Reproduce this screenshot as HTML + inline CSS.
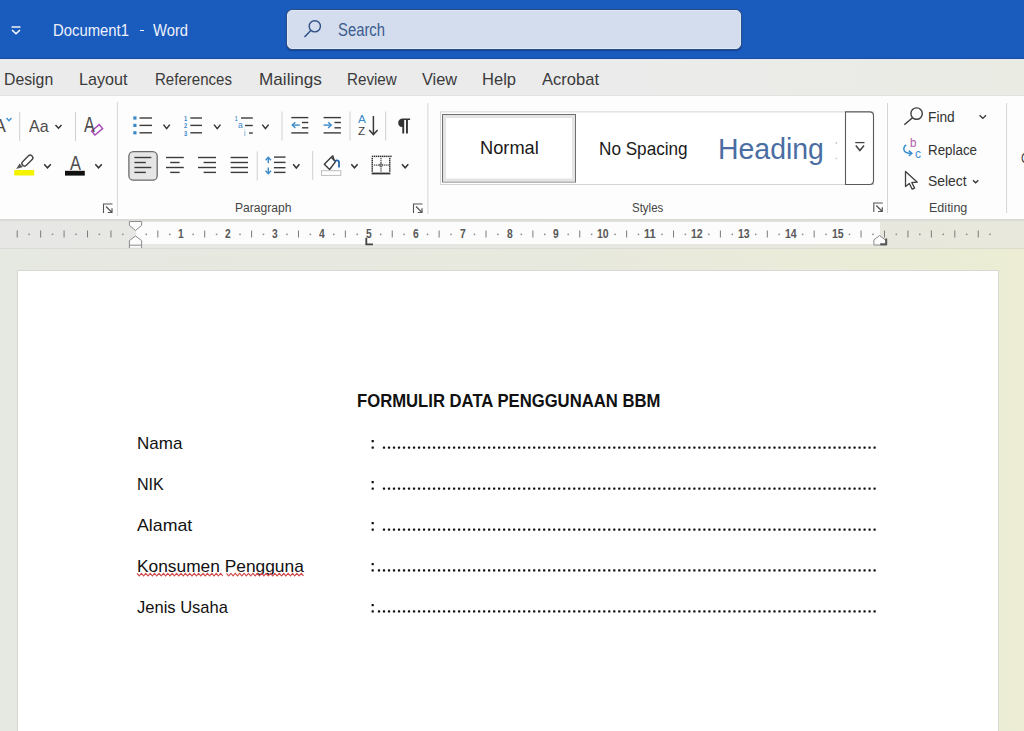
<!DOCTYPE html>
<html><head><meta charset="utf-8"><style>
html,body{margin:0;padding:0;width:1024px;height:731px;overflow:hidden;background:#fff}
body{position:relative;font-family:"Liberation Sans",sans-serif}
.t{position:absolute;white-space:nowrap;line-height:normal;transform-origin:0 0}
svg{position:absolute;left:0;top:0}
</style></head><body>
<div style="position:absolute;left:0;top:0;width:1024px;height:59px;background:#1a5bbe"></div>
<div style="position:absolute;left:0;top:58px;width:1024px;height:1px;background:#1d4a9c"></div>
<div style="position:absolute;left:0;top:59px;width:1024px;height:1px;background:#e2eaf6"></div>
<div class="t" style="left:53.00px;top:21.00px;font-size:16.570px;color:#eef2fb;transform:scaleX(0.8967);">Document1</div>
<div style="position:absolute;left:140px;top:29.8px;width:4px;height:1.6px;background:#eef2fb"></div>
<div class="t" style="left:153.00px;top:21.00px;font-size:16.570px;color:#eef2fb;transform:scaleX(0.8913);">Word</div>
<div style="position:absolute;left:287px;top:10px;width:452px;height:37px;background:#d3dded;border:1px solid #dfe6f4;border-radius:5px;box-shadow:0 0 0 1px #2a4f8a,0 1px 1px 1px rgba(20,40,90,.5)"></div>
<div class="t" style="left:338.00px;top:20.22px;font-size:17.442px;color:#3c5c90;transform:scaleX(0.8501);">Search</div>
<div style="position:absolute;left:0;top:60px;width:1024px;height:36px;background:linear-gradient(90deg,#ebebeb 0%,#ebebec 55%,#eaebe3 100%)"></div>
<div style="position:absolute;left:0;top:95px;width:1024px;height:1px;background:#e2e2e2"></div>
<div class="t" style="left:3.75px;top:69.51px;font-size:17.006px;color:#3a3a3a;transform:scaleX(0.9297);">Design</div>
<div class="t" style="left:79.00px;top:69.51px;font-size:17.006px;color:#3a3a3a;transform:scaleX(0.9491);">Layout</div>
<div class="t" style="left:155.00px;top:69.51px;font-size:17.006px;color:#3a3a3a;transform:scaleX(0.8852);">References</div>
<div class="t" style="left:259.00px;top:69.51px;font-size:17.006px;color:#3a3a3a;transform:scaleX(1.0094);">Mailings</div>
<div class="t" style="left:347.00px;top:69.51px;font-size:17.006px;color:#3a3a3a;transform:scaleX(0.8928);">Review</div>
<div class="t" style="left:422.00px;top:69.51px;font-size:17.006px;color:#3a3a3a;transform:scaleX(0.9600);">View</div>
<div class="t" style="left:481.70px;top:69.51px;font-size:17.006px;color:#3a3a3a;transform:scaleX(0.9729);">Help</div>
<div class="t" style="left:542.00px;top:69.51px;font-size:17.006px;color:#3a3a3a;transform:scaleX(0.9729);">Acrobat</div>
<div style="position:absolute;left:0;top:96px;width:1024px;height:124px;background:#fdfdfd"></div>
<div class="t" style="left:234.50px;top:199.86px;font-size:13.081px;color:#444;transform:scaleX(0.9249);">Paragraph</div>
<div class="t" style="left:632.30px;top:200.03px;font-size:13.227px;color:#444;transform:scaleX(0.8684);">Styles</div>
<div class="t" style="left:928.50px;top:200.03px;font-size:13.227px;color:#444;transform:scaleX(0.9488);">Editing</div>
<div class="t" style="left:928.40px;top:109.15px;font-size:14.535px;color:#333;transform:scaleX(0.9480);">Find</div>
<div class="t" style="left:928.40px;top:141.68px;font-size:14.390px;color:#333;transform:scaleX(0.9298);">Replace</div>
<div class="t" style="left:928.40px;top:173.48px;font-size:14.390px;color:#333;transform:scaleX(0.9674);">Select</div>
<svg width="1024" height="731" style="position:absolute;left:0;top:0">
<line x1="11.5" y1="27" x2="20.5" y2="27" stroke="#ffffff" stroke-width="1.4"/>
<polyline points="12,30 16.0,33.8 20,30" fill="none" stroke="#ffffff" stroke-width="1.5"/>
<circle cx="314.8" cy="26.3" r="5.6" fill="none" stroke="#2d4f86" stroke-width="1.4"/>
<line x1="310.8" y1="30.4" x2="304.5" y2="37" stroke="#2d4f86" stroke-width="1.5"/>
<polyline points="6.5,118 9.0,120.8 11.5,118" fill="none" stroke="#3a8fd0" stroke-width="1.3"/>
<rect x="19.2" y="112" width="1" height="29" fill="#cfcfcf"/>
<rect x="75.0" y="112" width="1" height="29" fill="#cfcfcf"/>
<polyline points="55.5,125 58.5,128.3 61.5,125" fill="none" stroke="#333" stroke-width="1.4"/>
<rect x="-5" y="-2.6" width="10" height="5.2" transform="translate(97.1,129.8) rotate(-40)" fill="#fff" stroke="#a64fb5" stroke-width="1.5"/>
<line x1="95.3" y1="134.3" x2="91.4" y2="129.8" stroke="#a64fb5" stroke-width="0"/>
<rect x="116.9" y="102" width="1" height="114" fill="#d6d6d6"/>
<rect x="-2.6" y="-6.5" width="5.2" height="13" rx="2.4" transform="translate(27.4,160.6) rotate(45)" fill="#fff" stroke="#444" stroke-width="1.4"/>
<polygon points="16.2,169 19.5,163.5 23,167" fill="#555"/>
<rect x="14.2" y="170" width="20" height="5.5" fill="#f3f300"/>
<polyline points="44.2,164.2 47.5,167.8 50.8,164.2" fill="none" stroke="#333" stroke-width="1.5"/>
<rect x="65" y="170.8" width="19.8" height="4.8" fill="#111"/>
<polyline points="95.3,164.2 98.55,167.8 101.8,164.2" fill="none" stroke="#333" stroke-width="1.5"/>
<path d="M103.5,213 V204 H112.5" fill="none" stroke="#555" stroke-width="1.1"/><path d="M106.0,206.5 L112.0,212.5 M112.0,208.2 V212.5 H107.7" fill="none" stroke="#555" stroke-width="1.2"/>
<path d="M413.5,213 V204 H422.5" fill="none" stroke="#555" stroke-width="1.1"/><path d="M416.0,206.5 L422.0,212.5 M422.0,208.2 V212.5 H417.7" fill="none" stroke="#555" stroke-width="1.2"/>
<path d="M873.8,212 V203 H882.8" fill="none" stroke="#555" stroke-width="1.1"/><path d="M876.3,205.5 L882.3,211.5 M882.3,207.2 V211.5 H878.0" fill="none" stroke="#555" stroke-width="1.2"/>
<rect x="133.3" y="116.4" width="3.2" height="3.2" fill="#3a89c9"/>
<line x1="139.5" y1="118" x2="152" y2="118" stroke="#3b3b3b" stroke-width="1.4"/>
<rect x="133.3" y="123.80000000000001" width="3.2" height="3.2" fill="#3a89c9"/>
<line x1="139.5" y1="125.4" x2="152" y2="125.4" stroke="#3b3b3b" stroke-width="1.4"/>
<rect x="133.3" y="131.20000000000002" width="3.2" height="3.2" fill="#3a89c9"/>
<line x1="139.5" y1="132.8" x2="152" y2="132.8" stroke="#3b3b3b" stroke-width="1.4"/>
<polyline points="163.5,124.6 166.65,128.6 169.8,124.6" fill="none" stroke="#333" stroke-width="1.5"/>
<line x1="190.3" y1="118" x2="202" y2="118" stroke="#3b3b3b" stroke-width="1.4"/>
<line x1="190.3" y1="125.4" x2="202" y2="125.4" stroke="#3b3b3b" stroke-width="1.4"/>
<line x1="190.3" y1="132.8" x2="202" y2="132.8" stroke="#3b3b3b" stroke-width="1.4"/>
<polyline points="214,124.6 217.25,128.6 220.5,124.6" fill="none" stroke="#333" stroke-width="1.5"/>
<line x1="241" y1="118" x2="252.8" y2="118" stroke="#3b3b3b" stroke-width="1.4"/>
<line x1="245" y1="125.5" x2="252.8" y2="125.5" stroke="#3b3b3b" stroke-width="1.4"/>
<line x1="249" y1="133" x2="252.8" y2="133" stroke="#3b3b3b" stroke-width="1.4"/>
<polyline points="262.3,124.6 265.45000000000005,128.6 268.6,124.6" fill="none" stroke="#333" stroke-width="1.5"/>
<rect x="281.5" y="111.5" width="1" height="29.0" fill="#cfcfcf"/>
<rect x="349.5" y="111.5" width="1" height="29.0" fill="#cfcfcf"/>
<rect x="385.2" y="111.5" width="1" height="29.0" fill="#cfcfcf"/>
<line x1="291.3" y1="117.6" x2="308.3" y2="117.6" stroke="#3b3b3b" stroke-width="1.4"/>
<line x1="302" y1="122.5" x2="308.3" y2="122.5" stroke="#3b3b3b" stroke-width="1.4"/>
<line x1="302" y1="127.8" x2="308.3" y2="127.8" stroke="#3b3b3b" stroke-width="1.4"/>
<line x1="291.3" y1="132.9" x2="308.3" y2="132.9" stroke="#3b3b3b" stroke-width="1.4"/>
<line x1="292.5" y1="125.1" x2="299.8" y2="125.1" stroke="#3a89c9" stroke-width="1.4"/>
<polyline points="295.3,122.3 292.3,125.1 295.3,127.9" fill="none" stroke="#3a89c9" stroke-width="1.4"/>
<line x1="323.6" y1="117.6" x2="340.9" y2="117.6" stroke="#3b3b3b" stroke-width="1.4"/>
<line x1="334.5" y1="122.5" x2="340.9" y2="122.5" stroke="#3b3b3b" stroke-width="1.4"/>
<line x1="334.5" y1="127.8" x2="340.9" y2="127.8" stroke="#3b3b3b" stroke-width="1.4"/>
<line x1="323.6" y1="132.9" x2="340.9" y2="132.9" stroke="#3b3b3b" stroke-width="1.4"/>
<line x1="323.6" y1="125.1" x2="331" y2="125.1" stroke="#3a89c9" stroke-width="1.4"/>
<polyline points="328.2,122.3 331.2,125.1 328.2,127.9" fill="none" stroke="#3a89c9" stroke-width="1.4"/>
<line x1="373.4" y1="116" x2="373.4" y2="134.5" stroke="#3b3b3b" stroke-width="1.5"/>
<polyline points="369.2,130 373.4,134.6 377.6,130" fill="none" stroke="#3b3b3b" stroke-width="1.5"/>
<path d="M402.8,118.4 H410.1 V120 H407.9 V133.6 H406 V120 H404.2 V133.6 H402.3 V127.1 C399.6,127 398.2,125 398.2,122.7 C398.2,120.3 400,118.4 402.8,118.4 Z" fill="#333"/>
<rect x="427.4" y="103" width="1" height="111" fill="#d6d6d6"/>
<rect x="128.9" y="151.6" width="28.3" height="28.6" rx="4.5" fill="#e6e6e6" stroke="#6b6b6b" stroke-width="1.3"/>
<line x1="134.4" y1="157.5" x2="151.3" y2="157.5" stroke="#3b3b3b" stroke-width="1.4"/><line x1="134.4" y1="162.5" x2="145.8" y2="162.5" stroke="#3b3b3b" stroke-width="1.4"/><line x1="134.4" y1="167.5" x2="151.3" y2="167.5" stroke="#3b3b3b" stroke-width="1.4"/><line x1="134.4" y1="172.4" x2="145.8" y2="172.4" stroke="#3b3b3b" stroke-width="1.4"/>
<line x1="166" y1="157.5" x2="183.8" y2="157.5" stroke="#3b3b3b" stroke-width="1.4"/><line x1="170.2" y1="162.5" x2="179.6" y2="162.5" stroke="#3b3b3b" stroke-width="1.4"/><line x1="166" y1="167.5" x2="183.8" y2="167.5" stroke="#3b3b3b" stroke-width="1.4"/><line x1="170.2" y1="172.4" x2="179.6" y2="172.4" stroke="#3b3b3b" stroke-width="1.4"/>
<line x1="198" y1="157.5" x2="216" y2="157.5" stroke="#3b3b3b" stroke-width="1.4"/><line x1="203.6" y1="162.5" x2="216" y2="162.5" stroke="#3b3b3b" stroke-width="1.4"/><line x1="198" y1="167.5" x2="216" y2="167.5" stroke="#3b3b3b" stroke-width="1.4"/><line x1="203.6" y1="172.4" x2="216" y2="172.4" stroke="#3b3b3b" stroke-width="1.4"/>
<line x1="230.6" y1="157.5" x2="248" y2="157.5" stroke="#3b3b3b" stroke-width="1.4"/><line x1="230.6" y1="162.5" x2="248" y2="162.5" stroke="#3b3b3b" stroke-width="1.4"/><line x1="230.6" y1="167.5" x2="248" y2="167.5" stroke="#3b3b3b" stroke-width="1.4"/><line x1="230.6" y1="172.4" x2="248" y2="172.4" stroke="#3b3b3b" stroke-width="1.4"/>
<rect x="256.7" y="151.5" width="1" height="29.0" fill="#cfcfcf"/>
<rect x="312.2" y="151" width="1" height="29" fill="#cfcfcf"/>
<line x1="274" y1="157.1" x2="285.5" y2="157.1" stroke="#3b3b3b" stroke-width="1.4"/>
<line x1="274" y1="162.4" x2="285.5" y2="162.4" stroke="#3b3b3b" stroke-width="1.4"/>
<line x1="274" y1="167.7" x2="285.5" y2="167.7" stroke="#3b3b3b" stroke-width="1.4"/>
<line x1="274" y1="172.4" x2="285.5" y2="172.4" stroke="#3b3b3b" stroke-width="1.4"/>
<line x1="268.3" y1="157.5" x2="268.3" y2="163.3" stroke="#3a89c9" stroke-width="1.4"/>
<line x1="268.3" y1="167.6" x2="268.3" y2="173.5" stroke="#3a89c9" stroke-width="1.4"/>
<polyline points="265.6,160.2 268.3,157.3 271,160.2" fill="none" stroke="#3a89c9" stroke-width="1.4"/>
<polyline points="265.6,170.8 268.3,173.7 271,170.8" fill="none" stroke="#3a89c9" stroke-width="1.4"/>
<polyline points="293.2,164.2 296.29999999999995,168 299.4,164.2" fill="none" stroke="#333" stroke-width="1.5"/>
<path d="M324.3,164.2 L331.2,157.3 L335.5,161.6 L329.6,169.5 Z" fill="#fff" stroke="#3b3b3b" stroke-width="1.4" stroke-linejoin="round"/>
<path d="M331.2,157.3 L332.8,155.9 L334.2,160.4" fill="none" stroke="#3b3b3b" stroke-width="1.4"/>
<path d="M335.2,161 Q337.5,159.3 339,161.6 L339,167.5" fill="none" stroke="#1f5fa8" stroke-width="1.7"/>
<rect x="321.5" y="170.7" width="19.3" height="4.7" fill="#fff" stroke="#bdbdbd" stroke-width="1"/>
<polyline points="351.3,164.3 354.45000000000005,167.8 357.6,164.3" fill="none" stroke="#333" stroke-width="1.5"/>
<rect x="371.80" y="155.6" width="1.5" height="1.5" fill="#333"/><rect x="373.84" y="155.6" width="1.5" height="1.5" fill="#333"/><rect x="375.88" y="155.6" width="1.5" height="1.5" fill="#333"/><rect x="377.92" y="155.6" width="1.5" height="1.5" fill="#333"/><rect x="379.96" y="155.6" width="1.5" height="1.5" fill="#333"/><rect x="382.00" y="155.6" width="1.5" height="1.5" fill="#333"/><rect x="384.04" y="155.6" width="1.5" height="1.5" fill="#333"/><rect x="386.08" y="155.6" width="1.5" height="1.5" fill="#333"/><rect x="388.12" y="155.6" width="1.5" height="1.5" fill="#333"/><rect x="390.16" y="155.6" width="1.5" height="1.5" fill="#333"/><rect x="371.5" y="157.86" width="1.5" height="1.5" fill="#333"/><rect x="389" y="157.86" width="1.5" height="1.5" fill="#333"/><rect x="380.3" y="157.86" width="1.4" height="1.4" fill="#666"/><rect x="371.5" y="159.92" width="1.5" height="1.5" fill="#333"/><rect x="389" y="159.92" width="1.5" height="1.5" fill="#333"/><rect x="380.3" y="159.92" width="1.4" height="1.4" fill="#666"/><rect x="371.5" y="161.98" width="1.5" height="1.5" fill="#333"/><rect x="389" y="161.98" width="1.5" height="1.5" fill="#333"/><rect x="380.3" y="161.98" width="1.4" height="1.4" fill="#666"/><rect x="371.5" y="164.04" width="1.5" height="1.5" fill="#333"/><rect x="389" y="164.04" width="1.5" height="1.5" fill="#333"/><rect x="380.3" y="164.04" width="1.4" height="1.4" fill="#666"/><rect x="371.5" y="166.10" width="1.5" height="1.5" fill="#333"/><rect x="389" y="166.10" width="1.5" height="1.5" fill="#333"/><rect x="380.3" y="166.10" width="1.4" height="1.4" fill="#666"/><rect x="371.5" y="168.16" width="1.5" height="1.5" fill="#333"/><rect x="389" y="168.16" width="1.5" height="1.5" fill="#333"/><rect x="380.3" y="168.16" width="1.4" height="1.4" fill="#666"/><rect x="371.5" y="170.22" width="1.5" height="1.5" fill="#333"/><rect x="389" y="170.22" width="1.5" height="1.5" fill="#333"/><rect x="380.3" y="170.22" width="1.4" height="1.4" fill="#666"/><rect x="373.84" y="164.4" width="1.4" height="1.4" fill="#666"/><rect x="375.88" y="164.4" width="1.4" height="1.4" fill="#666"/><rect x="377.92" y="164.4" width="1.4" height="1.4" fill="#666"/><rect x="379.96" y="164.4" width="1.4" height="1.4" fill="#666"/><rect x="382.00" y="164.4" width="1.4" height="1.4" fill="#666"/><rect x="384.04" y="164.4" width="1.4" height="1.4" fill="#666"/><rect x="386.08" y="164.4" width="1.4" height="1.4" fill="#666"/><rect x="388.12" y="164.4" width="1.4" height="1.4" fill="#666"/>
<circle cx="381" cy="165.1" r="1.6" fill="none" stroke="#666" stroke-width="0.9"/>
<rect x="371.6" y="172.6" width="18.8" height="1.8" fill="#333"/>
<polyline points="402,164.3 405.15,167.8 408.3,164.3" fill="none" stroke="#333" stroke-width="1.5"/>
<rect x="440.5" y="111.9" width="433" height="72.6" fill="#fff" stroke="#d6d6d6" stroke-width="1"/>
<rect x="442.5" y="114.5" width="133" height="67.5" fill="#fff" stroke="#6e6e6e" stroke-width="1"/>
<rect x="444.5" y="116.5" width="129" height="63.5" fill="none" stroke="#e4e4e4" stroke-width="3"/>
<path d="M845.5,111.9 H869.5 Q873.5,111.9 873.5,115.9 V180.5 Q873.5,184.5 869.5,184.5 H845.5 Z" fill="#fff" stroke="#5a5a5a" stroke-width="1.1"/>
<line x1="855.3" y1="142.6" x2="864.5" y2="142.6" stroke="#444" stroke-width="1.3"/>
<polyline points="855.8,145.6 859.9,150.6 864,145.6" fill="none" stroke="#444" stroke-width="1.5"/>
<rect x="835.7" y="142.2" width="1.1" height="1.4" fill="#9a9a9a"/><rect x="835.7" y="157.8" width="1.1" height="1.4" fill="#b5b5b5"/>
<rect x="887.0" y="103" width="1" height="110" fill="#d6d6d6"/>
<rect x="1006.1" y="103" width="1" height="110" fill="#d6d6d6"/>
<circle cx="916.6" cy="113.6" r="5.7" fill="none" stroke="#3d3d3d" stroke-width="1.4"/>
<line x1="912.5" y1="117.8" x2="904.3" y2="124.8" stroke="#3d3d3d" stroke-width="1.5"/>
<polyline points="979.6,115.2 982.8,118.4 986,115.2" fill="none" stroke="#333" stroke-width="1.3"/>
<path d="M906.2,144.8 Q902.5,147.5 904.5,151.2 Q906.3,153.4 911.5,153.3" fill="none" stroke="#3a8fd0" stroke-width="1.5"/>
<polyline points="908.8,150.6 911.8,153.3 908.8,156" fill="none" stroke="#3a8fd0" stroke-width="1.5"/>
<path d="M905.5,171.5 L905.5,186.6 L909.3,183.4 L912.2,189.2 L914.6,188.1 L911.8,182.5 L917.3,182.2 Z" fill="#fff" stroke="#404040" stroke-width="1.3" stroke-linejoin="round"/>
<polyline points="973,180.2 975.65,182.8 978.3,180.2" fill="none" stroke="#333" stroke-width="1.3"/>
</svg>
<div class="t" style="left:479.80px;top:138.48px;font-size:17.587px;color:#1a1a1a;transform:scaleX(1.0385);">Normal</div>
<div class="t" style="left:598.80px;top:137.64px;font-size:19.186px;color:#1a1a1a;transform:scaleX(0.8942);">No Spacing</div>
<div class="t" style="left:717.80px;top:132.43px;font-size:29.360px;color:#4a6da3;transform:scaleX(0.9683);">Heading</div>
<div class="t" style="left:-6.20px;top:115.92px;font-size:17.442px;color:#4c4c4c;transform:scaleX(1.0183);">A</div>
<div class="t" style="left:28.60px;top:116.61px;font-size:17.006px;color:#4c4c4c;transform:scaleX(0.9409);">Aa</div>
<div class="t" style="left:83.80px;top:110.92px;font-size:22.965px;color:#4c4c4c;transform:scaleX(0.7019);">A</div>
<div class="t" style="left:69.60px;top:151.57px;font-size:19.477px;color:#4c4c4c;transform:scaleX(0.8429);">A</div>
<div class="t" style="left:183.80px;top:113.92px;font-size:7.267px;color:#3a89c9;font-weight:bold;transform:scaleX(0.7934);">1</div>
<div class="t" style="left:183.80px;top:121.42px;font-size:7.267px;color:#3a89c9;font-weight:bold;transform:scaleX(0.7934);">2</div>
<div class="t" style="left:183.80px;top:128.92px;font-size:7.267px;color:#3a89c9;font-weight:bold;transform:scaleX(0.7934);">3</div>
<div class="t" style="left:234.60px;top:113.62px;font-size:7.267px;color:#3a89c9;font-weight:bold;transform:scaleX(0.5950);">1</div>
<div class="t" style="left:237.50px;top:120.26px;font-size:8.889px;color:#3a89c9;transform:scaleX(0.9643);">a</div>
<div class="t" style="left:244.00px;top:127.74px;font-size:8.571px;color:#3a89c9;transform:scaleX(0.7424);">i</div>
<div class="t" style="left:358.40px;top:114.49px;font-size:10.174px;color:#3a89c9;transform:scaleX(1.1589);">A</div>
<div class="t" style="left:358.40px;top:125.73px;font-size:10.465px;color:#3b3b3b;transform:scaleX(1.1122);">Z</div>
<div class="t" style="left:909.80px;top:136.10px;font-size:12.703px;color:#b05aa8;transform:scaleX(0.9078);">b</div>
<div class="t" style="left:914.60px;top:145.73px;font-size:13.333px;color:#3a8fd0;transform:scaleX(0.9000);">c</div>
<div class="t" style="left:1020.80px;top:149.88px;font-size:14.826px;color:#444;transform:scaleX(0.7682);">C</div>
<div style="position:absolute;left:0;top:221px;width:1024px;height:28px;background:linear-gradient(90deg,#e7e8e5,#e7e7e1 60%,#e8e8dc)"></div>
<div style="position:absolute;left:136px;top:222px;width:744px;height:22px;background:#fcfcfc"></div>
<div style="position:absolute;left:0;top:219px;width:1024px;height:3px;background:linear-gradient(180deg,#d6d6d4,#dcdcd8 50%,rgba(225,225,220,0))"></div>
<svg width="1024" height="731" style="position:absolute;left:0;top:0">
<rect x="16.70" y="230.5" width="1" height="7" fill="#7a7a7a"/>
<rect x="28.32" y="233.6" width="1.5" height="1.5" fill="#8a8a8a"/>
<rect x="40.14" y="230.5" width="1" height="7" fill="#7a7a7a"/>
<rect x="51.76" y="233.6" width="1.5" height="1.5" fill="#8a8a8a"/>
<rect x="63.58" y="230.5" width="1" height="7" fill="#7a7a7a"/>
<rect x="75.20" y="233.6" width="1.5" height="1.5" fill="#8a8a8a"/>
<rect x="87.02" y="230.5" width="1" height="7" fill="#7a7a7a"/>
<rect x="98.64" y="233.6" width="1.5" height="1.5" fill="#8a8a8a"/>
<rect x="110.46" y="230.5" width="1" height="7" fill="#7a7a7a"/>
<rect x="122.08" y="233.6" width="1.5" height="1.5" fill="#8a8a8a"/>
<rect x="145.52" y="233.6" width="1.5" height="1.5" fill="#8a8a8a"/>
<rect x="157.34" y="230.5" width="1" height="7" fill="#7a7a7a"/>
<rect x="168.96" y="233.6" width="1.5" height="1.5" fill="#8a8a8a"/>
<rect x="192.40" y="233.6" width="1.5" height="1.5" fill="#8a8a8a"/>
<rect x="204.22" y="230.5" width="1" height="7" fill="#7a7a7a"/>
<rect x="215.84" y="233.6" width="1.5" height="1.5" fill="#8a8a8a"/>
<rect x="239.28" y="233.6" width="1.5" height="1.5" fill="#8a8a8a"/>
<rect x="251.10" y="230.5" width="1" height="7" fill="#7a7a7a"/>
<rect x="262.72" y="233.6" width="1.5" height="1.5" fill="#8a8a8a"/>
<rect x="286.16" y="233.6" width="1.5" height="1.5" fill="#8a8a8a"/>
<rect x="297.98" y="230.5" width="1" height="7" fill="#7a7a7a"/>
<rect x="309.60" y="233.6" width="1.5" height="1.5" fill="#8a8a8a"/>
<rect x="333.04" y="233.6" width="1.5" height="1.5" fill="#8a8a8a"/>
<rect x="344.86" y="230.5" width="1" height="7" fill="#7a7a7a"/>
<rect x="356.48" y="233.6" width="1.5" height="1.5" fill="#8a8a8a"/>
<rect x="379.92" y="233.6" width="1.5" height="1.5" fill="#8a8a8a"/>
<rect x="391.74" y="230.5" width="1" height="7" fill="#7a7a7a"/>
<rect x="403.36" y="233.6" width="1.5" height="1.5" fill="#8a8a8a"/>
<rect x="426.80" y="233.6" width="1.5" height="1.5" fill="#8a8a8a"/>
<rect x="438.62" y="230.5" width="1" height="7" fill="#7a7a7a"/>
<rect x="450.24" y="233.6" width="1.5" height="1.5" fill="#8a8a8a"/>
<rect x="473.68" y="233.6" width="1.5" height="1.5" fill="#8a8a8a"/>
<rect x="485.50" y="230.5" width="1" height="7" fill="#7a7a7a"/>
<rect x="497.12" y="233.6" width="1.5" height="1.5" fill="#8a8a8a"/>
<rect x="520.56" y="233.6" width="1.5" height="1.5" fill="#8a8a8a"/>
<rect x="532.38" y="230.5" width="1" height="7" fill="#7a7a7a"/>
<rect x="544.00" y="233.6" width="1.5" height="1.5" fill="#8a8a8a"/>
<rect x="567.44" y="233.6" width="1.5" height="1.5" fill="#8a8a8a"/>
<rect x="579.26" y="230.5" width="1" height="7" fill="#7a7a7a"/>
<rect x="590.88" y="233.6" width="1.5" height="1.5" fill="#8a8a8a"/>
<rect x="614.32" y="233.6" width="1.5" height="1.5" fill="#8a8a8a"/>
<rect x="626.14" y="230.5" width="1" height="7" fill="#7a7a7a"/>
<rect x="637.76" y="233.6" width="1.5" height="1.5" fill="#8a8a8a"/>
<rect x="661.20" y="233.6" width="1.5" height="1.5" fill="#8a8a8a"/>
<rect x="673.02" y="230.5" width="1" height="7" fill="#7a7a7a"/>
<rect x="684.64" y="233.6" width="1.5" height="1.5" fill="#8a8a8a"/>
<rect x="708.08" y="233.6" width="1.5" height="1.5" fill="#8a8a8a"/>
<rect x="719.90" y="230.5" width="1" height="7" fill="#7a7a7a"/>
<rect x="731.52" y="233.6" width="1.5" height="1.5" fill="#8a8a8a"/>
<rect x="754.96" y="233.6" width="1.5" height="1.5" fill="#8a8a8a"/>
<rect x="766.78" y="230.5" width="1" height="7" fill="#7a7a7a"/>
<rect x="778.40" y="233.6" width="1.5" height="1.5" fill="#8a8a8a"/>
<rect x="801.84" y="233.6" width="1.5" height="1.5" fill="#8a8a8a"/>
<rect x="813.66" y="230.5" width="1" height="7" fill="#7a7a7a"/>
<rect x="825.28" y="233.6" width="1.5" height="1.5" fill="#8a8a8a"/>
<rect x="848.72" y="233.6" width="1.5" height="1.5" fill="#8a8a8a"/>
<rect x="860.54" y="230.5" width="1" height="7" fill="#7a7a7a"/>
<rect x="872.16" y="233.6" width="1.5" height="1.5" fill="#8a8a8a"/>
<rect x="883.98" y="230.5" width="1" height="7" fill="#7a7a7a"/>
<rect x="895.60" y="233.6" width="1.5" height="1.5" fill="#8a8a8a"/>
<rect x="907.42" y="230.5" width="1" height="7" fill="#7a7a7a"/>
<rect x="919.04" y="233.6" width="1.5" height="1.5" fill="#8a8a8a"/>
<rect x="930.86" y="230.5" width="1" height="7" fill="#7a7a7a"/>
<rect x="942.48" y="233.6" width="1.5" height="1.5" fill="#8a8a8a"/>
<rect x="954.30" y="230.5" width="1" height="7" fill="#7a7a7a"/>
<rect x="965.92" y="233.6" width="1.5" height="1.5" fill="#8a8a8a"/>
<rect x="977.74" y="230.5" width="1" height="7" fill="#7a7a7a"/>
<rect x="989.36" y="233.6" width="1.5" height="1.5" fill="#8a8a8a"/>
</svg>
<div class="t" style="left:178.43px;top:227.18px;font-size:12.064px;color:#585858;font-weight:bold;transform:scaleX(0.8513);">1</div>
<div class="t" style="left:225.31px;top:227.18px;font-size:12.064px;color:#585858;font-weight:bold;transform:scaleX(0.8513);">2</div>
<div class="t" style="left:272.19px;top:227.18px;font-size:12.064px;color:#585858;font-weight:bold;transform:scaleX(0.8513);">3</div>
<div class="t" style="left:319.07px;top:227.18px;font-size:12.064px;color:#585858;font-weight:bold;transform:scaleX(0.8513);">4</div>
<div class="t" style="left:365.95px;top:227.18px;font-size:12.064px;color:#585858;font-weight:bold;transform:scaleX(0.8513);">5</div>
<div class="t" style="left:412.83px;top:227.18px;font-size:12.064px;color:#585858;font-weight:bold;transform:scaleX(0.8513);">6</div>
<div class="t" style="left:459.71px;top:227.18px;font-size:12.064px;color:#585858;font-weight:bold;transform:scaleX(0.8513);">7</div>
<div class="t" style="left:506.59px;top:227.18px;font-size:12.064px;color:#585858;font-weight:bold;transform:scaleX(0.8513);">8</div>
<div class="t" style="left:553.47px;top:227.18px;font-size:12.064px;color:#585858;font-weight:bold;transform:scaleX(0.8513);">9</div>
<div class="t" style="left:597.35px;top:227.18px;font-size:12.064px;color:#585858;font-weight:bold;transform:scaleX(0.8737);">10</div>
<div class="t" style="left:644.23px;top:227.18px;font-size:12.064px;color:#585858;font-weight:bold;transform:scaleX(0.9193);">11</div>
<div class="t" style="left:691.11px;top:227.18px;font-size:12.064px;color:#585858;font-weight:bold;transform:scaleX(0.8737);">12</div>
<div class="t" style="left:737.99px;top:227.18px;font-size:12.064px;color:#585858;font-weight:bold;transform:scaleX(0.8737);">13</div>
<div class="t" style="left:784.87px;top:227.18px;font-size:12.064px;color:#585858;font-weight:bold;transform:scaleX(0.8737);">14</div>
<div class="t" style="left:831.75px;top:227.18px;font-size:12.064px;color:#585858;font-weight:bold;transform:scaleX(0.8737);">15</div>
<svg width="1024" height="731" style="position:absolute;left:0;top:0">
<path d="M129.4,221.5 H141.6 V225.4 L135.5,230.5 L129.4,225.4 Z" fill="#fcfcfc" stroke="#8c8c8c" stroke-width="1"/>
<path d="M135.5,236 L141.6,240.6 V248.4 H129.4 V240.6 Z" fill="#fcfcfc" stroke="#8c8c8c" stroke-width="1"/>
<line x1="129.4" y1="245.2" x2="141.6" y2="245.2" stroke="#8c8c8c" stroke-width="1"/>
<path d="M366.3,237.8 V244.4 H373" fill="none" stroke="#444" stroke-width="1.8"/>
<path d="M873.9,245 V239.9 L879.5,235.5 L886.2,240.6 V245 Z" fill="#fcfcfc" stroke="#8a8a8a" stroke-width="1"/>
<path d="M880.2,244.3 H886.2 V238.6" fill="none" stroke="#555" stroke-width="2"/>
</svg>
<div style="position:absolute;left:0;top:249px;width:1024px;height:482px;background:linear-gradient(90deg,#e6e8e2,#e8e9de 55%,#ecedd4)"></div>
<div style="position:absolute;left:0;top:248px;width:1024px;height:1px;background:linear-gradient(90deg,#dadada,#dcdcd6 70%,#dcdccc)"></div>
<div style="position:absolute;left:17px;top:270px;width:980px;height:461px;background:#fff;border:1px solid #d8d8d4;border-bottom:none"></div>
<div class="t" style="left:356.60px;top:391.48px;font-size:17.587px;color:#111;font-weight:bold;transform:scaleX(0.9482);">FORMULIR DATA PENGGUNAAN BBM</div>
<div class="t" style="left:137.00px;top:433.28px;font-size:17.151px;color:#111;transform:scaleX(0.9936);">Nama</div>
<div class="t" style="left:137.00px;top:474.48px;font-size:17.151px;color:#111;transform:scaleX(0.9385);">NIK</div>
<div class="t" style="left:137.00px;top:515.48px;font-size:17.151px;color:#111;transform:scaleX(1.0349);">Alamat</div>
<div class="t" style="left:137.00px;top:556.28px;font-size:17.151px;color:#111;transform:scaleX(1.0116);">Konsumen Pengguna</div>
<div class="t" style="left:137.00px;top:597.48px;font-size:17.151px;color:#111;transform:scaleX(0.9638);">Jenis Usaha</div>
<svg width="1024" height="731" style="position:absolute;left:0;top:0">
<rect x="371.55" y="440.00" width="2.3" height="2.3" rx="0.6" fill="#111"/>
<rect x="371.55" y="446.40" width="2.3" height="2.3" rx="0.6" fill="#111"/>
<rect x="382.86" y="446.40" width="2.3" height="2.3" rx="0.6" fill="#111"/>
<rect x="387.87" y="446.40" width="2.3" height="2.3" rx="0.6" fill="#111"/>
<rect x="392.87" y="446.40" width="2.3" height="2.3" rx="0.6" fill="#111"/>
<rect x="397.88" y="446.40" width="2.3" height="2.3" rx="0.6" fill="#111"/>
<rect x="402.89" y="446.40" width="2.3" height="2.3" rx="0.6" fill="#111"/>
<rect x="407.89" y="446.40" width="2.3" height="2.3" rx="0.6" fill="#111"/>
<rect x="412.90" y="446.40" width="2.3" height="2.3" rx="0.6" fill="#111"/>
<rect x="417.90" y="446.40" width="2.3" height="2.3" rx="0.6" fill="#111"/>
<rect x="422.91" y="446.40" width="2.3" height="2.3" rx="0.6" fill="#111"/>
<rect x="427.92" y="446.40" width="2.3" height="2.3" rx="0.6" fill="#111"/>
<rect x="432.92" y="446.40" width="2.3" height="2.3" rx="0.6" fill="#111"/>
<rect x="437.93" y="446.40" width="2.3" height="2.3" rx="0.6" fill="#111"/>
<rect x="442.93" y="446.40" width="2.3" height="2.3" rx="0.6" fill="#111"/>
<rect x="447.94" y="446.40" width="2.3" height="2.3" rx="0.6" fill="#111"/>
<rect x="452.95" y="446.40" width="2.3" height="2.3" rx="0.6" fill="#111"/>
<rect x="457.95" y="446.40" width="2.3" height="2.3" rx="0.6" fill="#111"/>
<rect x="462.96" y="446.40" width="2.3" height="2.3" rx="0.6" fill="#111"/>
<rect x="467.96" y="446.40" width="2.3" height="2.3" rx="0.6" fill="#111"/>
<rect x="472.97" y="446.40" width="2.3" height="2.3" rx="0.6" fill="#111"/>
<rect x="477.98" y="446.40" width="2.3" height="2.3" rx="0.6" fill="#111"/>
<rect x="482.98" y="446.40" width="2.3" height="2.3" rx="0.6" fill="#111"/>
<rect x="487.99" y="446.40" width="2.3" height="2.3" rx="0.6" fill="#111"/>
<rect x="492.99" y="446.40" width="2.3" height="2.3" rx="0.6" fill="#111"/>
<rect x="498.00" y="446.40" width="2.3" height="2.3" rx="0.6" fill="#111"/>
<rect x="503.01" y="446.40" width="2.3" height="2.3" rx="0.6" fill="#111"/>
<rect x="508.01" y="446.40" width="2.3" height="2.3" rx="0.6" fill="#111"/>
<rect x="513.02" y="446.40" width="2.3" height="2.3" rx="0.6" fill="#111"/>
<rect x="518.02" y="446.40" width="2.3" height="2.3" rx="0.6" fill="#111"/>
<rect x="523.03" y="446.40" width="2.3" height="2.3" rx="0.6" fill="#111"/>
<rect x="528.04" y="446.40" width="2.3" height="2.3" rx="0.6" fill="#111"/>
<rect x="533.04" y="446.40" width="2.3" height="2.3" rx="0.6" fill="#111"/>
<rect x="538.05" y="446.40" width="2.3" height="2.3" rx="0.6" fill="#111"/>
<rect x="543.05" y="446.40" width="2.3" height="2.3" rx="0.6" fill="#111"/>
<rect x="548.06" y="446.40" width="2.3" height="2.3" rx="0.6" fill="#111"/>
<rect x="553.07" y="446.40" width="2.3" height="2.3" rx="0.6" fill="#111"/>
<rect x="558.07" y="446.40" width="2.3" height="2.3" rx="0.6" fill="#111"/>
<rect x="563.08" y="446.40" width="2.3" height="2.3" rx="0.6" fill="#111"/>
<rect x="568.08" y="446.40" width="2.3" height="2.3" rx="0.6" fill="#111"/>
<rect x="573.09" y="446.40" width="2.3" height="2.3" rx="0.6" fill="#111"/>
<rect x="578.10" y="446.40" width="2.3" height="2.3" rx="0.6" fill="#111"/>
<rect x="583.10" y="446.40" width="2.3" height="2.3" rx="0.6" fill="#111"/>
<rect x="588.11" y="446.40" width="2.3" height="2.3" rx="0.6" fill="#111"/>
<rect x="593.11" y="446.40" width="2.3" height="2.3" rx="0.6" fill="#111"/>
<rect x="598.12" y="446.40" width="2.3" height="2.3" rx="0.6" fill="#111"/>
<rect x="603.13" y="446.40" width="2.3" height="2.3" rx="0.6" fill="#111"/>
<rect x="608.13" y="446.40" width="2.3" height="2.3" rx="0.6" fill="#111"/>
<rect x="613.14" y="446.40" width="2.3" height="2.3" rx="0.6" fill="#111"/>
<rect x="618.14" y="446.40" width="2.3" height="2.3" rx="0.6" fill="#111"/>
<rect x="623.15" y="446.40" width="2.3" height="2.3" rx="0.6" fill="#111"/>
<rect x="628.16" y="446.40" width="2.3" height="2.3" rx="0.6" fill="#111"/>
<rect x="633.16" y="446.40" width="2.3" height="2.3" rx="0.6" fill="#111"/>
<rect x="638.17" y="446.40" width="2.3" height="2.3" rx="0.6" fill="#111"/>
<rect x="643.17" y="446.40" width="2.3" height="2.3" rx="0.6" fill="#111"/>
<rect x="648.18" y="446.40" width="2.3" height="2.3" rx="0.6" fill="#111"/>
<rect x="653.19" y="446.40" width="2.3" height="2.3" rx="0.6" fill="#111"/>
<rect x="658.19" y="446.40" width="2.3" height="2.3" rx="0.6" fill="#111"/>
<rect x="663.20" y="446.40" width="2.3" height="2.3" rx="0.6" fill="#111"/>
<rect x="668.20" y="446.40" width="2.3" height="2.3" rx="0.6" fill="#111"/>
<rect x="673.21" y="446.40" width="2.3" height="2.3" rx="0.6" fill="#111"/>
<rect x="678.22" y="446.40" width="2.3" height="2.3" rx="0.6" fill="#111"/>
<rect x="683.22" y="446.40" width="2.3" height="2.3" rx="0.6" fill="#111"/>
<rect x="688.23" y="446.40" width="2.3" height="2.3" rx="0.6" fill="#111"/>
<rect x="693.23" y="446.40" width="2.3" height="2.3" rx="0.6" fill="#111"/>
<rect x="698.24" y="446.40" width="2.3" height="2.3" rx="0.6" fill="#111"/>
<rect x="703.25" y="446.40" width="2.3" height="2.3" rx="0.6" fill="#111"/>
<rect x="708.25" y="446.40" width="2.3" height="2.3" rx="0.6" fill="#111"/>
<rect x="713.26" y="446.40" width="2.3" height="2.3" rx="0.6" fill="#111"/>
<rect x="718.26" y="446.40" width="2.3" height="2.3" rx="0.6" fill="#111"/>
<rect x="723.27" y="446.40" width="2.3" height="2.3" rx="0.6" fill="#111"/>
<rect x="728.28" y="446.40" width="2.3" height="2.3" rx="0.6" fill="#111"/>
<rect x="733.28" y="446.40" width="2.3" height="2.3" rx="0.6" fill="#111"/>
<rect x="738.29" y="446.40" width="2.3" height="2.3" rx="0.6" fill="#111"/>
<rect x="743.29" y="446.40" width="2.3" height="2.3" rx="0.6" fill="#111"/>
<rect x="748.30" y="446.40" width="2.3" height="2.3" rx="0.6" fill="#111"/>
<rect x="753.31" y="446.40" width="2.3" height="2.3" rx="0.6" fill="#111"/>
<rect x="758.31" y="446.40" width="2.3" height="2.3" rx="0.6" fill="#111"/>
<rect x="763.32" y="446.40" width="2.3" height="2.3" rx="0.6" fill="#111"/>
<rect x="768.32" y="446.40" width="2.3" height="2.3" rx="0.6" fill="#111"/>
<rect x="773.33" y="446.40" width="2.3" height="2.3" rx="0.6" fill="#111"/>
<rect x="778.34" y="446.40" width="2.3" height="2.3" rx="0.6" fill="#111"/>
<rect x="783.34" y="446.40" width="2.3" height="2.3" rx="0.6" fill="#111"/>
<rect x="788.35" y="446.40" width="2.3" height="2.3" rx="0.6" fill="#111"/>
<rect x="793.35" y="446.40" width="2.3" height="2.3" rx="0.6" fill="#111"/>
<rect x="798.36" y="446.40" width="2.3" height="2.3" rx="0.6" fill="#111"/>
<rect x="803.37" y="446.40" width="2.3" height="2.3" rx="0.6" fill="#111"/>
<rect x="808.37" y="446.40" width="2.3" height="2.3" rx="0.6" fill="#111"/>
<rect x="813.38" y="446.40" width="2.3" height="2.3" rx="0.6" fill="#111"/>
<rect x="818.38" y="446.40" width="2.3" height="2.3" rx="0.6" fill="#111"/>
<rect x="823.39" y="446.40" width="2.3" height="2.3" rx="0.6" fill="#111"/>
<rect x="828.40" y="446.40" width="2.3" height="2.3" rx="0.6" fill="#111"/>
<rect x="833.40" y="446.40" width="2.3" height="2.3" rx="0.6" fill="#111"/>
<rect x="838.41" y="446.40" width="2.3" height="2.3" rx="0.6" fill="#111"/>
<rect x="843.41" y="446.40" width="2.3" height="2.3" rx="0.6" fill="#111"/>
<rect x="848.42" y="446.40" width="2.3" height="2.3" rx="0.6" fill="#111"/>
<rect x="853.43" y="446.40" width="2.3" height="2.3" rx="0.6" fill="#111"/>
<rect x="858.43" y="446.40" width="2.3" height="2.3" rx="0.6" fill="#111"/>
<rect x="863.44" y="446.40" width="2.3" height="2.3" rx="0.6" fill="#111"/>
<rect x="868.44" y="446.40" width="2.3" height="2.3" rx="0.6" fill="#111"/>
<rect x="873.45" y="446.40" width="2.3" height="2.3" rx="0.6" fill="#111"/>
<rect x="371.55" y="481.00" width="2.3" height="2.3" rx="0.6" fill="#111"/>
<rect x="371.55" y="487.40" width="2.3" height="2.3" rx="0.6" fill="#111"/>
<rect x="382.86" y="487.40" width="2.3" height="2.3" rx="0.6" fill="#111"/>
<rect x="387.87" y="487.40" width="2.3" height="2.3" rx="0.6" fill="#111"/>
<rect x="392.87" y="487.40" width="2.3" height="2.3" rx="0.6" fill="#111"/>
<rect x="397.88" y="487.40" width="2.3" height="2.3" rx="0.6" fill="#111"/>
<rect x="402.89" y="487.40" width="2.3" height="2.3" rx="0.6" fill="#111"/>
<rect x="407.89" y="487.40" width="2.3" height="2.3" rx="0.6" fill="#111"/>
<rect x="412.90" y="487.40" width="2.3" height="2.3" rx="0.6" fill="#111"/>
<rect x="417.90" y="487.40" width="2.3" height="2.3" rx="0.6" fill="#111"/>
<rect x="422.91" y="487.40" width="2.3" height="2.3" rx="0.6" fill="#111"/>
<rect x="427.92" y="487.40" width="2.3" height="2.3" rx="0.6" fill="#111"/>
<rect x="432.92" y="487.40" width="2.3" height="2.3" rx="0.6" fill="#111"/>
<rect x="437.93" y="487.40" width="2.3" height="2.3" rx="0.6" fill="#111"/>
<rect x="442.93" y="487.40" width="2.3" height="2.3" rx="0.6" fill="#111"/>
<rect x="447.94" y="487.40" width="2.3" height="2.3" rx="0.6" fill="#111"/>
<rect x="452.95" y="487.40" width="2.3" height="2.3" rx="0.6" fill="#111"/>
<rect x="457.95" y="487.40" width="2.3" height="2.3" rx="0.6" fill="#111"/>
<rect x="462.96" y="487.40" width="2.3" height="2.3" rx="0.6" fill="#111"/>
<rect x="467.96" y="487.40" width="2.3" height="2.3" rx="0.6" fill="#111"/>
<rect x="472.97" y="487.40" width="2.3" height="2.3" rx="0.6" fill="#111"/>
<rect x="477.98" y="487.40" width="2.3" height="2.3" rx="0.6" fill="#111"/>
<rect x="482.98" y="487.40" width="2.3" height="2.3" rx="0.6" fill="#111"/>
<rect x="487.99" y="487.40" width="2.3" height="2.3" rx="0.6" fill="#111"/>
<rect x="492.99" y="487.40" width="2.3" height="2.3" rx="0.6" fill="#111"/>
<rect x="498.00" y="487.40" width="2.3" height="2.3" rx="0.6" fill="#111"/>
<rect x="503.01" y="487.40" width="2.3" height="2.3" rx="0.6" fill="#111"/>
<rect x="508.01" y="487.40" width="2.3" height="2.3" rx="0.6" fill="#111"/>
<rect x="513.02" y="487.40" width="2.3" height="2.3" rx="0.6" fill="#111"/>
<rect x="518.02" y="487.40" width="2.3" height="2.3" rx="0.6" fill="#111"/>
<rect x="523.03" y="487.40" width="2.3" height="2.3" rx="0.6" fill="#111"/>
<rect x="528.04" y="487.40" width="2.3" height="2.3" rx="0.6" fill="#111"/>
<rect x="533.04" y="487.40" width="2.3" height="2.3" rx="0.6" fill="#111"/>
<rect x="538.05" y="487.40" width="2.3" height="2.3" rx="0.6" fill="#111"/>
<rect x="543.05" y="487.40" width="2.3" height="2.3" rx="0.6" fill="#111"/>
<rect x="548.06" y="487.40" width="2.3" height="2.3" rx="0.6" fill="#111"/>
<rect x="553.07" y="487.40" width="2.3" height="2.3" rx="0.6" fill="#111"/>
<rect x="558.07" y="487.40" width="2.3" height="2.3" rx="0.6" fill="#111"/>
<rect x="563.08" y="487.40" width="2.3" height="2.3" rx="0.6" fill="#111"/>
<rect x="568.08" y="487.40" width="2.3" height="2.3" rx="0.6" fill="#111"/>
<rect x="573.09" y="487.40" width="2.3" height="2.3" rx="0.6" fill="#111"/>
<rect x="578.10" y="487.40" width="2.3" height="2.3" rx="0.6" fill="#111"/>
<rect x="583.10" y="487.40" width="2.3" height="2.3" rx="0.6" fill="#111"/>
<rect x="588.11" y="487.40" width="2.3" height="2.3" rx="0.6" fill="#111"/>
<rect x="593.11" y="487.40" width="2.3" height="2.3" rx="0.6" fill="#111"/>
<rect x="598.12" y="487.40" width="2.3" height="2.3" rx="0.6" fill="#111"/>
<rect x="603.13" y="487.40" width="2.3" height="2.3" rx="0.6" fill="#111"/>
<rect x="608.13" y="487.40" width="2.3" height="2.3" rx="0.6" fill="#111"/>
<rect x="613.14" y="487.40" width="2.3" height="2.3" rx="0.6" fill="#111"/>
<rect x="618.14" y="487.40" width="2.3" height="2.3" rx="0.6" fill="#111"/>
<rect x="623.15" y="487.40" width="2.3" height="2.3" rx="0.6" fill="#111"/>
<rect x="628.16" y="487.40" width="2.3" height="2.3" rx="0.6" fill="#111"/>
<rect x="633.16" y="487.40" width="2.3" height="2.3" rx="0.6" fill="#111"/>
<rect x="638.17" y="487.40" width="2.3" height="2.3" rx="0.6" fill="#111"/>
<rect x="643.17" y="487.40" width="2.3" height="2.3" rx="0.6" fill="#111"/>
<rect x="648.18" y="487.40" width="2.3" height="2.3" rx="0.6" fill="#111"/>
<rect x="653.19" y="487.40" width="2.3" height="2.3" rx="0.6" fill="#111"/>
<rect x="658.19" y="487.40" width="2.3" height="2.3" rx="0.6" fill="#111"/>
<rect x="663.20" y="487.40" width="2.3" height="2.3" rx="0.6" fill="#111"/>
<rect x="668.20" y="487.40" width="2.3" height="2.3" rx="0.6" fill="#111"/>
<rect x="673.21" y="487.40" width="2.3" height="2.3" rx="0.6" fill="#111"/>
<rect x="678.22" y="487.40" width="2.3" height="2.3" rx="0.6" fill="#111"/>
<rect x="683.22" y="487.40" width="2.3" height="2.3" rx="0.6" fill="#111"/>
<rect x="688.23" y="487.40" width="2.3" height="2.3" rx="0.6" fill="#111"/>
<rect x="693.23" y="487.40" width="2.3" height="2.3" rx="0.6" fill="#111"/>
<rect x="698.24" y="487.40" width="2.3" height="2.3" rx="0.6" fill="#111"/>
<rect x="703.25" y="487.40" width="2.3" height="2.3" rx="0.6" fill="#111"/>
<rect x="708.25" y="487.40" width="2.3" height="2.3" rx="0.6" fill="#111"/>
<rect x="713.26" y="487.40" width="2.3" height="2.3" rx="0.6" fill="#111"/>
<rect x="718.26" y="487.40" width="2.3" height="2.3" rx="0.6" fill="#111"/>
<rect x="723.27" y="487.40" width="2.3" height="2.3" rx="0.6" fill="#111"/>
<rect x="728.28" y="487.40" width="2.3" height="2.3" rx="0.6" fill="#111"/>
<rect x="733.28" y="487.40" width="2.3" height="2.3" rx="0.6" fill="#111"/>
<rect x="738.29" y="487.40" width="2.3" height="2.3" rx="0.6" fill="#111"/>
<rect x="743.29" y="487.40" width="2.3" height="2.3" rx="0.6" fill="#111"/>
<rect x="748.30" y="487.40" width="2.3" height="2.3" rx="0.6" fill="#111"/>
<rect x="753.31" y="487.40" width="2.3" height="2.3" rx="0.6" fill="#111"/>
<rect x="758.31" y="487.40" width="2.3" height="2.3" rx="0.6" fill="#111"/>
<rect x="763.32" y="487.40" width="2.3" height="2.3" rx="0.6" fill="#111"/>
<rect x="768.32" y="487.40" width="2.3" height="2.3" rx="0.6" fill="#111"/>
<rect x="773.33" y="487.40" width="2.3" height="2.3" rx="0.6" fill="#111"/>
<rect x="778.34" y="487.40" width="2.3" height="2.3" rx="0.6" fill="#111"/>
<rect x="783.34" y="487.40" width="2.3" height="2.3" rx="0.6" fill="#111"/>
<rect x="788.35" y="487.40" width="2.3" height="2.3" rx="0.6" fill="#111"/>
<rect x="793.35" y="487.40" width="2.3" height="2.3" rx="0.6" fill="#111"/>
<rect x="798.36" y="487.40" width="2.3" height="2.3" rx="0.6" fill="#111"/>
<rect x="803.37" y="487.40" width="2.3" height="2.3" rx="0.6" fill="#111"/>
<rect x="808.37" y="487.40" width="2.3" height="2.3" rx="0.6" fill="#111"/>
<rect x="813.38" y="487.40" width="2.3" height="2.3" rx="0.6" fill="#111"/>
<rect x="818.38" y="487.40" width="2.3" height="2.3" rx="0.6" fill="#111"/>
<rect x="823.39" y="487.40" width="2.3" height="2.3" rx="0.6" fill="#111"/>
<rect x="828.40" y="487.40" width="2.3" height="2.3" rx="0.6" fill="#111"/>
<rect x="833.40" y="487.40" width="2.3" height="2.3" rx="0.6" fill="#111"/>
<rect x="838.41" y="487.40" width="2.3" height="2.3" rx="0.6" fill="#111"/>
<rect x="843.41" y="487.40" width="2.3" height="2.3" rx="0.6" fill="#111"/>
<rect x="848.42" y="487.40" width="2.3" height="2.3" rx="0.6" fill="#111"/>
<rect x="853.43" y="487.40" width="2.3" height="2.3" rx="0.6" fill="#111"/>
<rect x="858.43" y="487.40" width="2.3" height="2.3" rx="0.6" fill="#111"/>
<rect x="863.44" y="487.40" width="2.3" height="2.3" rx="0.6" fill="#111"/>
<rect x="868.44" y="487.40" width="2.3" height="2.3" rx="0.6" fill="#111"/>
<rect x="873.45" y="487.40" width="2.3" height="2.3" rx="0.6" fill="#111"/>
<rect x="371.55" y="522.00" width="2.3" height="2.3" rx="0.6" fill="#111"/>
<rect x="371.55" y="528.40" width="2.3" height="2.3" rx="0.6" fill="#111"/>
<rect x="382.86" y="528.40" width="2.3" height="2.3" rx="0.6" fill="#111"/>
<rect x="387.87" y="528.40" width="2.3" height="2.3" rx="0.6" fill="#111"/>
<rect x="392.87" y="528.40" width="2.3" height="2.3" rx="0.6" fill="#111"/>
<rect x="397.88" y="528.40" width="2.3" height="2.3" rx="0.6" fill="#111"/>
<rect x="402.89" y="528.40" width="2.3" height="2.3" rx="0.6" fill="#111"/>
<rect x="407.89" y="528.40" width="2.3" height="2.3" rx="0.6" fill="#111"/>
<rect x="412.90" y="528.40" width="2.3" height="2.3" rx="0.6" fill="#111"/>
<rect x="417.90" y="528.40" width="2.3" height="2.3" rx="0.6" fill="#111"/>
<rect x="422.91" y="528.40" width="2.3" height="2.3" rx="0.6" fill="#111"/>
<rect x="427.92" y="528.40" width="2.3" height="2.3" rx="0.6" fill="#111"/>
<rect x="432.92" y="528.40" width="2.3" height="2.3" rx="0.6" fill="#111"/>
<rect x="437.93" y="528.40" width="2.3" height="2.3" rx="0.6" fill="#111"/>
<rect x="442.93" y="528.40" width="2.3" height="2.3" rx="0.6" fill="#111"/>
<rect x="447.94" y="528.40" width="2.3" height="2.3" rx="0.6" fill="#111"/>
<rect x="452.95" y="528.40" width="2.3" height="2.3" rx="0.6" fill="#111"/>
<rect x="457.95" y="528.40" width="2.3" height="2.3" rx="0.6" fill="#111"/>
<rect x="462.96" y="528.40" width="2.3" height="2.3" rx="0.6" fill="#111"/>
<rect x="467.96" y="528.40" width="2.3" height="2.3" rx="0.6" fill="#111"/>
<rect x="472.97" y="528.40" width="2.3" height="2.3" rx="0.6" fill="#111"/>
<rect x="477.98" y="528.40" width="2.3" height="2.3" rx="0.6" fill="#111"/>
<rect x="482.98" y="528.40" width="2.3" height="2.3" rx="0.6" fill="#111"/>
<rect x="487.99" y="528.40" width="2.3" height="2.3" rx="0.6" fill="#111"/>
<rect x="492.99" y="528.40" width="2.3" height="2.3" rx="0.6" fill="#111"/>
<rect x="498.00" y="528.40" width="2.3" height="2.3" rx="0.6" fill="#111"/>
<rect x="503.01" y="528.40" width="2.3" height="2.3" rx="0.6" fill="#111"/>
<rect x="508.01" y="528.40" width="2.3" height="2.3" rx="0.6" fill="#111"/>
<rect x="513.02" y="528.40" width="2.3" height="2.3" rx="0.6" fill="#111"/>
<rect x="518.02" y="528.40" width="2.3" height="2.3" rx="0.6" fill="#111"/>
<rect x="523.03" y="528.40" width="2.3" height="2.3" rx="0.6" fill="#111"/>
<rect x="528.04" y="528.40" width="2.3" height="2.3" rx="0.6" fill="#111"/>
<rect x="533.04" y="528.40" width="2.3" height="2.3" rx="0.6" fill="#111"/>
<rect x="538.05" y="528.40" width="2.3" height="2.3" rx="0.6" fill="#111"/>
<rect x="543.05" y="528.40" width="2.3" height="2.3" rx="0.6" fill="#111"/>
<rect x="548.06" y="528.40" width="2.3" height="2.3" rx="0.6" fill="#111"/>
<rect x="553.07" y="528.40" width="2.3" height="2.3" rx="0.6" fill="#111"/>
<rect x="558.07" y="528.40" width="2.3" height="2.3" rx="0.6" fill="#111"/>
<rect x="563.08" y="528.40" width="2.3" height="2.3" rx="0.6" fill="#111"/>
<rect x="568.08" y="528.40" width="2.3" height="2.3" rx="0.6" fill="#111"/>
<rect x="573.09" y="528.40" width="2.3" height="2.3" rx="0.6" fill="#111"/>
<rect x="578.10" y="528.40" width="2.3" height="2.3" rx="0.6" fill="#111"/>
<rect x="583.10" y="528.40" width="2.3" height="2.3" rx="0.6" fill="#111"/>
<rect x="588.11" y="528.40" width="2.3" height="2.3" rx="0.6" fill="#111"/>
<rect x="593.11" y="528.40" width="2.3" height="2.3" rx="0.6" fill="#111"/>
<rect x="598.12" y="528.40" width="2.3" height="2.3" rx="0.6" fill="#111"/>
<rect x="603.13" y="528.40" width="2.3" height="2.3" rx="0.6" fill="#111"/>
<rect x="608.13" y="528.40" width="2.3" height="2.3" rx="0.6" fill="#111"/>
<rect x="613.14" y="528.40" width="2.3" height="2.3" rx="0.6" fill="#111"/>
<rect x="618.14" y="528.40" width="2.3" height="2.3" rx="0.6" fill="#111"/>
<rect x="623.15" y="528.40" width="2.3" height="2.3" rx="0.6" fill="#111"/>
<rect x="628.16" y="528.40" width="2.3" height="2.3" rx="0.6" fill="#111"/>
<rect x="633.16" y="528.40" width="2.3" height="2.3" rx="0.6" fill="#111"/>
<rect x="638.17" y="528.40" width="2.3" height="2.3" rx="0.6" fill="#111"/>
<rect x="643.17" y="528.40" width="2.3" height="2.3" rx="0.6" fill="#111"/>
<rect x="648.18" y="528.40" width="2.3" height="2.3" rx="0.6" fill="#111"/>
<rect x="653.19" y="528.40" width="2.3" height="2.3" rx="0.6" fill="#111"/>
<rect x="658.19" y="528.40" width="2.3" height="2.3" rx="0.6" fill="#111"/>
<rect x="663.20" y="528.40" width="2.3" height="2.3" rx="0.6" fill="#111"/>
<rect x="668.20" y="528.40" width="2.3" height="2.3" rx="0.6" fill="#111"/>
<rect x="673.21" y="528.40" width="2.3" height="2.3" rx="0.6" fill="#111"/>
<rect x="678.22" y="528.40" width="2.3" height="2.3" rx="0.6" fill="#111"/>
<rect x="683.22" y="528.40" width="2.3" height="2.3" rx="0.6" fill="#111"/>
<rect x="688.23" y="528.40" width="2.3" height="2.3" rx="0.6" fill="#111"/>
<rect x="693.23" y="528.40" width="2.3" height="2.3" rx="0.6" fill="#111"/>
<rect x="698.24" y="528.40" width="2.3" height="2.3" rx="0.6" fill="#111"/>
<rect x="703.25" y="528.40" width="2.3" height="2.3" rx="0.6" fill="#111"/>
<rect x="708.25" y="528.40" width="2.3" height="2.3" rx="0.6" fill="#111"/>
<rect x="713.26" y="528.40" width="2.3" height="2.3" rx="0.6" fill="#111"/>
<rect x="718.26" y="528.40" width="2.3" height="2.3" rx="0.6" fill="#111"/>
<rect x="723.27" y="528.40" width="2.3" height="2.3" rx="0.6" fill="#111"/>
<rect x="728.28" y="528.40" width="2.3" height="2.3" rx="0.6" fill="#111"/>
<rect x="733.28" y="528.40" width="2.3" height="2.3" rx="0.6" fill="#111"/>
<rect x="738.29" y="528.40" width="2.3" height="2.3" rx="0.6" fill="#111"/>
<rect x="743.29" y="528.40" width="2.3" height="2.3" rx="0.6" fill="#111"/>
<rect x="748.30" y="528.40" width="2.3" height="2.3" rx="0.6" fill="#111"/>
<rect x="753.31" y="528.40" width="2.3" height="2.3" rx="0.6" fill="#111"/>
<rect x="758.31" y="528.40" width="2.3" height="2.3" rx="0.6" fill="#111"/>
<rect x="763.32" y="528.40" width="2.3" height="2.3" rx="0.6" fill="#111"/>
<rect x="768.32" y="528.40" width="2.3" height="2.3" rx="0.6" fill="#111"/>
<rect x="773.33" y="528.40" width="2.3" height="2.3" rx="0.6" fill="#111"/>
<rect x="778.34" y="528.40" width="2.3" height="2.3" rx="0.6" fill="#111"/>
<rect x="783.34" y="528.40" width="2.3" height="2.3" rx="0.6" fill="#111"/>
<rect x="788.35" y="528.40" width="2.3" height="2.3" rx="0.6" fill="#111"/>
<rect x="793.35" y="528.40" width="2.3" height="2.3" rx="0.6" fill="#111"/>
<rect x="798.36" y="528.40" width="2.3" height="2.3" rx="0.6" fill="#111"/>
<rect x="803.37" y="528.40" width="2.3" height="2.3" rx="0.6" fill="#111"/>
<rect x="808.37" y="528.40" width="2.3" height="2.3" rx="0.6" fill="#111"/>
<rect x="813.38" y="528.40" width="2.3" height="2.3" rx="0.6" fill="#111"/>
<rect x="818.38" y="528.40" width="2.3" height="2.3" rx="0.6" fill="#111"/>
<rect x="823.39" y="528.40" width="2.3" height="2.3" rx="0.6" fill="#111"/>
<rect x="828.40" y="528.40" width="2.3" height="2.3" rx="0.6" fill="#111"/>
<rect x="833.40" y="528.40" width="2.3" height="2.3" rx="0.6" fill="#111"/>
<rect x="838.41" y="528.40" width="2.3" height="2.3" rx="0.6" fill="#111"/>
<rect x="843.41" y="528.40" width="2.3" height="2.3" rx="0.6" fill="#111"/>
<rect x="848.42" y="528.40" width="2.3" height="2.3" rx="0.6" fill="#111"/>
<rect x="853.43" y="528.40" width="2.3" height="2.3" rx="0.6" fill="#111"/>
<rect x="858.43" y="528.40" width="2.3" height="2.3" rx="0.6" fill="#111"/>
<rect x="863.44" y="528.40" width="2.3" height="2.3" rx="0.6" fill="#111"/>
<rect x="868.44" y="528.40" width="2.3" height="2.3" rx="0.6" fill="#111"/>
<rect x="873.45" y="528.40" width="2.3" height="2.3" rx="0.6" fill="#111"/>
<rect x="371.55" y="562.90" width="2.3" height="2.3" rx="0.6" fill="#111"/>
<rect x="371.55" y="569.30" width="2.3" height="2.3" rx="0.6" fill="#111"/>
<rect x="377.86" y="569.30" width="2.3" height="2.3" rx="0.6" fill="#111"/>
<rect x="382.86" y="569.30" width="2.3" height="2.3" rx="0.6" fill="#111"/>
<rect x="387.87" y="569.30" width="2.3" height="2.3" rx="0.6" fill="#111"/>
<rect x="392.87" y="569.30" width="2.3" height="2.3" rx="0.6" fill="#111"/>
<rect x="397.88" y="569.30" width="2.3" height="2.3" rx="0.6" fill="#111"/>
<rect x="402.89" y="569.30" width="2.3" height="2.3" rx="0.6" fill="#111"/>
<rect x="407.89" y="569.30" width="2.3" height="2.3" rx="0.6" fill="#111"/>
<rect x="412.90" y="569.30" width="2.3" height="2.3" rx="0.6" fill="#111"/>
<rect x="417.90" y="569.30" width="2.3" height="2.3" rx="0.6" fill="#111"/>
<rect x="422.91" y="569.30" width="2.3" height="2.3" rx="0.6" fill="#111"/>
<rect x="427.92" y="569.30" width="2.3" height="2.3" rx="0.6" fill="#111"/>
<rect x="432.92" y="569.30" width="2.3" height="2.3" rx="0.6" fill="#111"/>
<rect x="437.93" y="569.30" width="2.3" height="2.3" rx="0.6" fill="#111"/>
<rect x="442.93" y="569.30" width="2.3" height="2.3" rx="0.6" fill="#111"/>
<rect x="447.94" y="569.30" width="2.3" height="2.3" rx="0.6" fill="#111"/>
<rect x="452.95" y="569.30" width="2.3" height="2.3" rx="0.6" fill="#111"/>
<rect x="457.95" y="569.30" width="2.3" height="2.3" rx="0.6" fill="#111"/>
<rect x="462.96" y="569.30" width="2.3" height="2.3" rx="0.6" fill="#111"/>
<rect x="467.96" y="569.30" width="2.3" height="2.3" rx="0.6" fill="#111"/>
<rect x="472.97" y="569.30" width="2.3" height="2.3" rx="0.6" fill="#111"/>
<rect x="477.98" y="569.30" width="2.3" height="2.3" rx="0.6" fill="#111"/>
<rect x="482.98" y="569.30" width="2.3" height="2.3" rx="0.6" fill="#111"/>
<rect x="487.99" y="569.30" width="2.3" height="2.3" rx="0.6" fill="#111"/>
<rect x="492.99" y="569.30" width="2.3" height="2.3" rx="0.6" fill="#111"/>
<rect x="498.00" y="569.30" width="2.3" height="2.3" rx="0.6" fill="#111"/>
<rect x="503.01" y="569.30" width="2.3" height="2.3" rx="0.6" fill="#111"/>
<rect x="508.01" y="569.30" width="2.3" height="2.3" rx="0.6" fill="#111"/>
<rect x="513.02" y="569.30" width="2.3" height="2.3" rx="0.6" fill="#111"/>
<rect x="518.02" y="569.30" width="2.3" height="2.3" rx="0.6" fill="#111"/>
<rect x="523.03" y="569.30" width="2.3" height="2.3" rx="0.6" fill="#111"/>
<rect x="528.04" y="569.30" width="2.3" height="2.3" rx="0.6" fill="#111"/>
<rect x="533.04" y="569.30" width="2.3" height="2.3" rx="0.6" fill="#111"/>
<rect x="538.05" y="569.30" width="2.3" height="2.3" rx="0.6" fill="#111"/>
<rect x="543.05" y="569.30" width="2.3" height="2.3" rx="0.6" fill="#111"/>
<rect x="548.06" y="569.30" width="2.3" height="2.3" rx="0.6" fill="#111"/>
<rect x="553.07" y="569.30" width="2.3" height="2.3" rx="0.6" fill="#111"/>
<rect x="558.07" y="569.30" width="2.3" height="2.3" rx="0.6" fill="#111"/>
<rect x="563.08" y="569.30" width="2.3" height="2.3" rx="0.6" fill="#111"/>
<rect x="568.08" y="569.30" width="2.3" height="2.3" rx="0.6" fill="#111"/>
<rect x="573.09" y="569.30" width="2.3" height="2.3" rx="0.6" fill="#111"/>
<rect x="578.10" y="569.30" width="2.3" height="2.3" rx="0.6" fill="#111"/>
<rect x="583.10" y="569.30" width="2.3" height="2.3" rx="0.6" fill="#111"/>
<rect x="588.11" y="569.30" width="2.3" height="2.3" rx="0.6" fill="#111"/>
<rect x="593.11" y="569.30" width="2.3" height="2.3" rx="0.6" fill="#111"/>
<rect x="598.12" y="569.30" width="2.3" height="2.3" rx="0.6" fill="#111"/>
<rect x="603.13" y="569.30" width="2.3" height="2.3" rx="0.6" fill="#111"/>
<rect x="608.13" y="569.30" width="2.3" height="2.3" rx="0.6" fill="#111"/>
<rect x="613.14" y="569.30" width="2.3" height="2.3" rx="0.6" fill="#111"/>
<rect x="618.14" y="569.30" width="2.3" height="2.3" rx="0.6" fill="#111"/>
<rect x="623.15" y="569.30" width="2.3" height="2.3" rx="0.6" fill="#111"/>
<rect x="628.16" y="569.30" width="2.3" height="2.3" rx="0.6" fill="#111"/>
<rect x="633.16" y="569.30" width="2.3" height="2.3" rx="0.6" fill="#111"/>
<rect x="638.17" y="569.30" width="2.3" height="2.3" rx="0.6" fill="#111"/>
<rect x="643.17" y="569.30" width="2.3" height="2.3" rx="0.6" fill="#111"/>
<rect x="648.18" y="569.30" width="2.3" height="2.3" rx="0.6" fill="#111"/>
<rect x="653.19" y="569.30" width="2.3" height="2.3" rx="0.6" fill="#111"/>
<rect x="658.19" y="569.30" width="2.3" height="2.3" rx="0.6" fill="#111"/>
<rect x="663.20" y="569.30" width="2.3" height="2.3" rx="0.6" fill="#111"/>
<rect x="668.20" y="569.30" width="2.3" height="2.3" rx="0.6" fill="#111"/>
<rect x="673.21" y="569.30" width="2.3" height="2.3" rx="0.6" fill="#111"/>
<rect x="678.22" y="569.30" width="2.3" height="2.3" rx="0.6" fill="#111"/>
<rect x="683.22" y="569.30" width="2.3" height="2.3" rx="0.6" fill="#111"/>
<rect x="688.23" y="569.30" width="2.3" height="2.3" rx="0.6" fill="#111"/>
<rect x="693.23" y="569.30" width="2.3" height="2.3" rx="0.6" fill="#111"/>
<rect x="698.24" y="569.30" width="2.3" height="2.3" rx="0.6" fill="#111"/>
<rect x="703.25" y="569.30" width="2.3" height="2.3" rx="0.6" fill="#111"/>
<rect x="708.25" y="569.30" width="2.3" height="2.3" rx="0.6" fill="#111"/>
<rect x="713.26" y="569.30" width="2.3" height="2.3" rx="0.6" fill="#111"/>
<rect x="718.26" y="569.30" width="2.3" height="2.3" rx="0.6" fill="#111"/>
<rect x="723.27" y="569.30" width="2.3" height="2.3" rx="0.6" fill="#111"/>
<rect x="728.28" y="569.30" width="2.3" height="2.3" rx="0.6" fill="#111"/>
<rect x="733.28" y="569.30" width="2.3" height="2.3" rx="0.6" fill="#111"/>
<rect x="738.29" y="569.30" width="2.3" height="2.3" rx="0.6" fill="#111"/>
<rect x="743.29" y="569.30" width="2.3" height="2.3" rx="0.6" fill="#111"/>
<rect x="748.30" y="569.30" width="2.3" height="2.3" rx="0.6" fill="#111"/>
<rect x="753.31" y="569.30" width="2.3" height="2.3" rx="0.6" fill="#111"/>
<rect x="758.31" y="569.30" width="2.3" height="2.3" rx="0.6" fill="#111"/>
<rect x="763.32" y="569.30" width="2.3" height="2.3" rx="0.6" fill="#111"/>
<rect x="768.32" y="569.30" width="2.3" height="2.3" rx="0.6" fill="#111"/>
<rect x="773.33" y="569.30" width="2.3" height="2.3" rx="0.6" fill="#111"/>
<rect x="778.34" y="569.30" width="2.3" height="2.3" rx="0.6" fill="#111"/>
<rect x="783.34" y="569.30" width="2.3" height="2.3" rx="0.6" fill="#111"/>
<rect x="788.35" y="569.30" width="2.3" height="2.3" rx="0.6" fill="#111"/>
<rect x="793.35" y="569.30" width="2.3" height="2.3" rx="0.6" fill="#111"/>
<rect x="798.36" y="569.30" width="2.3" height="2.3" rx="0.6" fill="#111"/>
<rect x="803.37" y="569.30" width="2.3" height="2.3" rx="0.6" fill="#111"/>
<rect x="808.37" y="569.30" width="2.3" height="2.3" rx="0.6" fill="#111"/>
<rect x="813.38" y="569.30" width="2.3" height="2.3" rx="0.6" fill="#111"/>
<rect x="818.38" y="569.30" width="2.3" height="2.3" rx="0.6" fill="#111"/>
<rect x="823.39" y="569.30" width="2.3" height="2.3" rx="0.6" fill="#111"/>
<rect x="828.40" y="569.30" width="2.3" height="2.3" rx="0.6" fill="#111"/>
<rect x="833.40" y="569.30" width="2.3" height="2.3" rx="0.6" fill="#111"/>
<rect x="838.41" y="569.30" width="2.3" height="2.3" rx="0.6" fill="#111"/>
<rect x="843.41" y="569.30" width="2.3" height="2.3" rx="0.6" fill="#111"/>
<rect x="848.42" y="569.30" width="2.3" height="2.3" rx="0.6" fill="#111"/>
<rect x="853.43" y="569.30" width="2.3" height="2.3" rx="0.6" fill="#111"/>
<rect x="858.43" y="569.30" width="2.3" height="2.3" rx="0.6" fill="#111"/>
<rect x="863.44" y="569.30" width="2.3" height="2.3" rx="0.6" fill="#111"/>
<rect x="868.44" y="569.30" width="2.3" height="2.3" rx="0.6" fill="#111"/>
<rect x="873.45" y="569.30" width="2.3" height="2.3" rx="0.6" fill="#111"/>
<rect x="371.55" y="603.90" width="2.3" height="2.3" rx="0.6" fill="#111"/>
<rect x="371.55" y="610.30" width="2.3" height="2.3" rx="0.6" fill="#111"/>
<rect x="377.86" y="610.30" width="2.3" height="2.3" rx="0.6" fill="#111"/>
<rect x="382.86" y="610.30" width="2.3" height="2.3" rx="0.6" fill="#111"/>
<rect x="387.87" y="610.30" width="2.3" height="2.3" rx="0.6" fill="#111"/>
<rect x="392.87" y="610.30" width="2.3" height="2.3" rx="0.6" fill="#111"/>
<rect x="397.88" y="610.30" width="2.3" height="2.3" rx="0.6" fill="#111"/>
<rect x="402.89" y="610.30" width="2.3" height="2.3" rx="0.6" fill="#111"/>
<rect x="407.89" y="610.30" width="2.3" height="2.3" rx="0.6" fill="#111"/>
<rect x="412.90" y="610.30" width="2.3" height="2.3" rx="0.6" fill="#111"/>
<rect x="417.90" y="610.30" width="2.3" height="2.3" rx="0.6" fill="#111"/>
<rect x="422.91" y="610.30" width="2.3" height="2.3" rx="0.6" fill="#111"/>
<rect x="427.92" y="610.30" width="2.3" height="2.3" rx="0.6" fill="#111"/>
<rect x="432.92" y="610.30" width="2.3" height="2.3" rx="0.6" fill="#111"/>
<rect x="437.93" y="610.30" width="2.3" height="2.3" rx="0.6" fill="#111"/>
<rect x="442.93" y="610.30" width="2.3" height="2.3" rx="0.6" fill="#111"/>
<rect x="447.94" y="610.30" width="2.3" height="2.3" rx="0.6" fill="#111"/>
<rect x="452.95" y="610.30" width="2.3" height="2.3" rx="0.6" fill="#111"/>
<rect x="457.95" y="610.30" width="2.3" height="2.3" rx="0.6" fill="#111"/>
<rect x="462.96" y="610.30" width="2.3" height="2.3" rx="0.6" fill="#111"/>
<rect x="467.96" y="610.30" width="2.3" height="2.3" rx="0.6" fill="#111"/>
<rect x="472.97" y="610.30" width="2.3" height="2.3" rx="0.6" fill="#111"/>
<rect x="477.98" y="610.30" width="2.3" height="2.3" rx="0.6" fill="#111"/>
<rect x="482.98" y="610.30" width="2.3" height="2.3" rx="0.6" fill="#111"/>
<rect x="487.99" y="610.30" width="2.3" height="2.3" rx="0.6" fill="#111"/>
<rect x="492.99" y="610.30" width="2.3" height="2.3" rx="0.6" fill="#111"/>
<rect x="498.00" y="610.30" width="2.3" height="2.3" rx="0.6" fill="#111"/>
<rect x="503.01" y="610.30" width="2.3" height="2.3" rx="0.6" fill="#111"/>
<rect x="508.01" y="610.30" width="2.3" height="2.3" rx="0.6" fill="#111"/>
<rect x="513.02" y="610.30" width="2.3" height="2.3" rx="0.6" fill="#111"/>
<rect x="518.02" y="610.30" width="2.3" height="2.3" rx="0.6" fill="#111"/>
<rect x="523.03" y="610.30" width="2.3" height="2.3" rx="0.6" fill="#111"/>
<rect x="528.04" y="610.30" width="2.3" height="2.3" rx="0.6" fill="#111"/>
<rect x="533.04" y="610.30" width="2.3" height="2.3" rx="0.6" fill="#111"/>
<rect x="538.05" y="610.30" width="2.3" height="2.3" rx="0.6" fill="#111"/>
<rect x="543.05" y="610.30" width="2.3" height="2.3" rx="0.6" fill="#111"/>
<rect x="548.06" y="610.30" width="2.3" height="2.3" rx="0.6" fill="#111"/>
<rect x="553.07" y="610.30" width="2.3" height="2.3" rx="0.6" fill="#111"/>
<rect x="558.07" y="610.30" width="2.3" height="2.3" rx="0.6" fill="#111"/>
<rect x="563.08" y="610.30" width="2.3" height="2.3" rx="0.6" fill="#111"/>
<rect x="568.08" y="610.30" width="2.3" height="2.3" rx="0.6" fill="#111"/>
<rect x="573.09" y="610.30" width="2.3" height="2.3" rx="0.6" fill="#111"/>
<rect x="578.10" y="610.30" width="2.3" height="2.3" rx="0.6" fill="#111"/>
<rect x="583.10" y="610.30" width="2.3" height="2.3" rx="0.6" fill="#111"/>
<rect x="588.11" y="610.30" width="2.3" height="2.3" rx="0.6" fill="#111"/>
<rect x="593.11" y="610.30" width="2.3" height="2.3" rx="0.6" fill="#111"/>
<rect x="598.12" y="610.30" width="2.3" height="2.3" rx="0.6" fill="#111"/>
<rect x="603.13" y="610.30" width="2.3" height="2.3" rx="0.6" fill="#111"/>
<rect x="608.13" y="610.30" width="2.3" height="2.3" rx="0.6" fill="#111"/>
<rect x="613.14" y="610.30" width="2.3" height="2.3" rx="0.6" fill="#111"/>
<rect x="618.14" y="610.30" width="2.3" height="2.3" rx="0.6" fill="#111"/>
<rect x="623.15" y="610.30" width="2.3" height="2.3" rx="0.6" fill="#111"/>
<rect x="628.16" y="610.30" width="2.3" height="2.3" rx="0.6" fill="#111"/>
<rect x="633.16" y="610.30" width="2.3" height="2.3" rx="0.6" fill="#111"/>
<rect x="638.17" y="610.30" width="2.3" height="2.3" rx="0.6" fill="#111"/>
<rect x="643.17" y="610.30" width="2.3" height="2.3" rx="0.6" fill="#111"/>
<rect x="648.18" y="610.30" width="2.3" height="2.3" rx="0.6" fill="#111"/>
<rect x="653.19" y="610.30" width="2.3" height="2.3" rx="0.6" fill="#111"/>
<rect x="658.19" y="610.30" width="2.3" height="2.3" rx="0.6" fill="#111"/>
<rect x="663.20" y="610.30" width="2.3" height="2.3" rx="0.6" fill="#111"/>
<rect x="668.20" y="610.30" width="2.3" height="2.3" rx="0.6" fill="#111"/>
<rect x="673.21" y="610.30" width="2.3" height="2.3" rx="0.6" fill="#111"/>
<rect x="678.22" y="610.30" width="2.3" height="2.3" rx="0.6" fill="#111"/>
<rect x="683.22" y="610.30" width="2.3" height="2.3" rx="0.6" fill="#111"/>
<rect x="688.23" y="610.30" width="2.3" height="2.3" rx="0.6" fill="#111"/>
<rect x="693.23" y="610.30" width="2.3" height="2.3" rx="0.6" fill="#111"/>
<rect x="698.24" y="610.30" width="2.3" height="2.3" rx="0.6" fill="#111"/>
<rect x="703.25" y="610.30" width="2.3" height="2.3" rx="0.6" fill="#111"/>
<rect x="708.25" y="610.30" width="2.3" height="2.3" rx="0.6" fill="#111"/>
<rect x="713.26" y="610.30" width="2.3" height="2.3" rx="0.6" fill="#111"/>
<rect x="718.26" y="610.30" width="2.3" height="2.3" rx="0.6" fill="#111"/>
<rect x="723.27" y="610.30" width="2.3" height="2.3" rx="0.6" fill="#111"/>
<rect x="728.28" y="610.30" width="2.3" height="2.3" rx="0.6" fill="#111"/>
<rect x="733.28" y="610.30" width="2.3" height="2.3" rx="0.6" fill="#111"/>
<rect x="738.29" y="610.30" width="2.3" height="2.3" rx="0.6" fill="#111"/>
<rect x="743.29" y="610.30" width="2.3" height="2.3" rx="0.6" fill="#111"/>
<rect x="748.30" y="610.30" width="2.3" height="2.3" rx="0.6" fill="#111"/>
<rect x="753.31" y="610.30" width="2.3" height="2.3" rx="0.6" fill="#111"/>
<rect x="758.31" y="610.30" width="2.3" height="2.3" rx="0.6" fill="#111"/>
<rect x="763.32" y="610.30" width="2.3" height="2.3" rx="0.6" fill="#111"/>
<rect x="768.32" y="610.30" width="2.3" height="2.3" rx="0.6" fill="#111"/>
<rect x="773.33" y="610.30" width="2.3" height="2.3" rx="0.6" fill="#111"/>
<rect x="778.34" y="610.30" width="2.3" height="2.3" rx="0.6" fill="#111"/>
<rect x="783.34" y="610.30" width="2.3" height="2.3" rx="0.6" fill="#111"/>
<rect x="788.35" y="610.30" width="2.3" height="2.3" rx="0.6" fill="#111"/>
<rect x="793.35" y="610.30" width="2.3" height="2.3" rx="0.6" fill="#111"/>
<rect x="798.36" y="610.30" width="2.3" height="2.3" rx="0.6" fill="#111"/>
<rect x="803.37" y="610.30" width="2.3" height="2.3" rx="0.6" fill="#111"/>
<rect x="808.37" y="610.30" width="2.3" height="2.3" rx="0.6" fill="#111"/>
<rect x="813.38" y="610.30" width="2.3" height="2.3" rx="0.6" fill="#111"/>
<rect x="818.38" y="610.30" width="2.3" height="2.3" rx="0.6" fill="#111"/>
<rect x="823.39" y="610.30" width="2.3" height="2.3" rx="0.6" fill="#111"/>
<rect x="828.40" y="610.30" width="2.3" height="2.3" rx="0.6" fill="#111"/>
<rect x="833.40" y="610.30" width="2.3" height="2.3" rx="0.6" fill="#111"/>
<rect x="838.41" y="610.30" width="2.3" height="2.3" rx="0.6" fill="#111"/>
<rect x="843.41" y="610.30" width="2.3" height="2.3" rx="0.6" fill="#111"/>
<rect x="848.42" y="610.30" width="2.3" height="2.3" rx="0.6" fill="#111"/>
<rect x="853.43" y="610.30" width="2.3" height="2.3" rx="0.6" fill="#111"/>
<rect x="858.43" y="610.30" width="2.3" height="2.3" rx="0.6" fill="#111"/>
<rect x="863.44" y="610.30" width="2.3" height="2.3" rx="0.6" fill="#111"/>
<rect x="868.44" y="610.30" width="2.3" height="2.3" rx="0.6" fill="#111"/>
<rect x="873.45" y="610.30" width="2.3" height="2.3" rx="0.6" fill="#111"/>
<polyline points="137.0,573.3 139.2,575.8 141.4,573.3 143.6,575.8 145.8,573.3 148.0,575.8 150.2,573.3 152.4,575.8 154.6,573.3 156.8,575.8 159.0,573.3 161.2,575.8 163.4,573.3 165.6,575.8 167.8,573.3 170.0,575.8 172.2,573.3 174.4,575.8 176.6,573.3 178.8,575.8 181.0,573.3 183.2,575.8 185.4,573.3 187.6,575.8 189.8,573.3 192.0,575.8 194.2,573.3 196.4,575.8 198.6,573.3 200.8,575.8 203.0,573.3 205.2,575.8 207.4,573.3 209.6,575.8 211.8,573.3 214.0,575.8 216.2,573.3 218.4,575.8 220.6,573.3 222.8,575.8" fill="none" stroke="#d24a4a" stroke-width="1.1"/>
<polyline points="226.5,573.3 228.7,575.8 230.9,573.3 233.1,575.8 235.3,573.3 237.5,575.8 239.7,573.3 241.9,575.8 244.1,573.3 246.3,575.8 248.5,573.3 250.7,575.8 252.9,573.3 255.1,575.8 257.3,573.3 259.5,575.8 261.7,573.3 263.9,575.8 266.1,573.3 268.3,575.8 270.5,573.3 272.7,575.8 274.9,573.3 277.1,575.8 279.3,573.3 281.5,575.8 283.7,573.3 285.9,575.8 288.1,573.3 290.3,575.8 292.5,573.3 294.7,575.8 296.9,573.3 299.1,575.8 301.3,573.3 303.5,575.8" fill="none" stroke="#d24a4a" stroke-width="1.1"/>
</svg>
</body></html>
